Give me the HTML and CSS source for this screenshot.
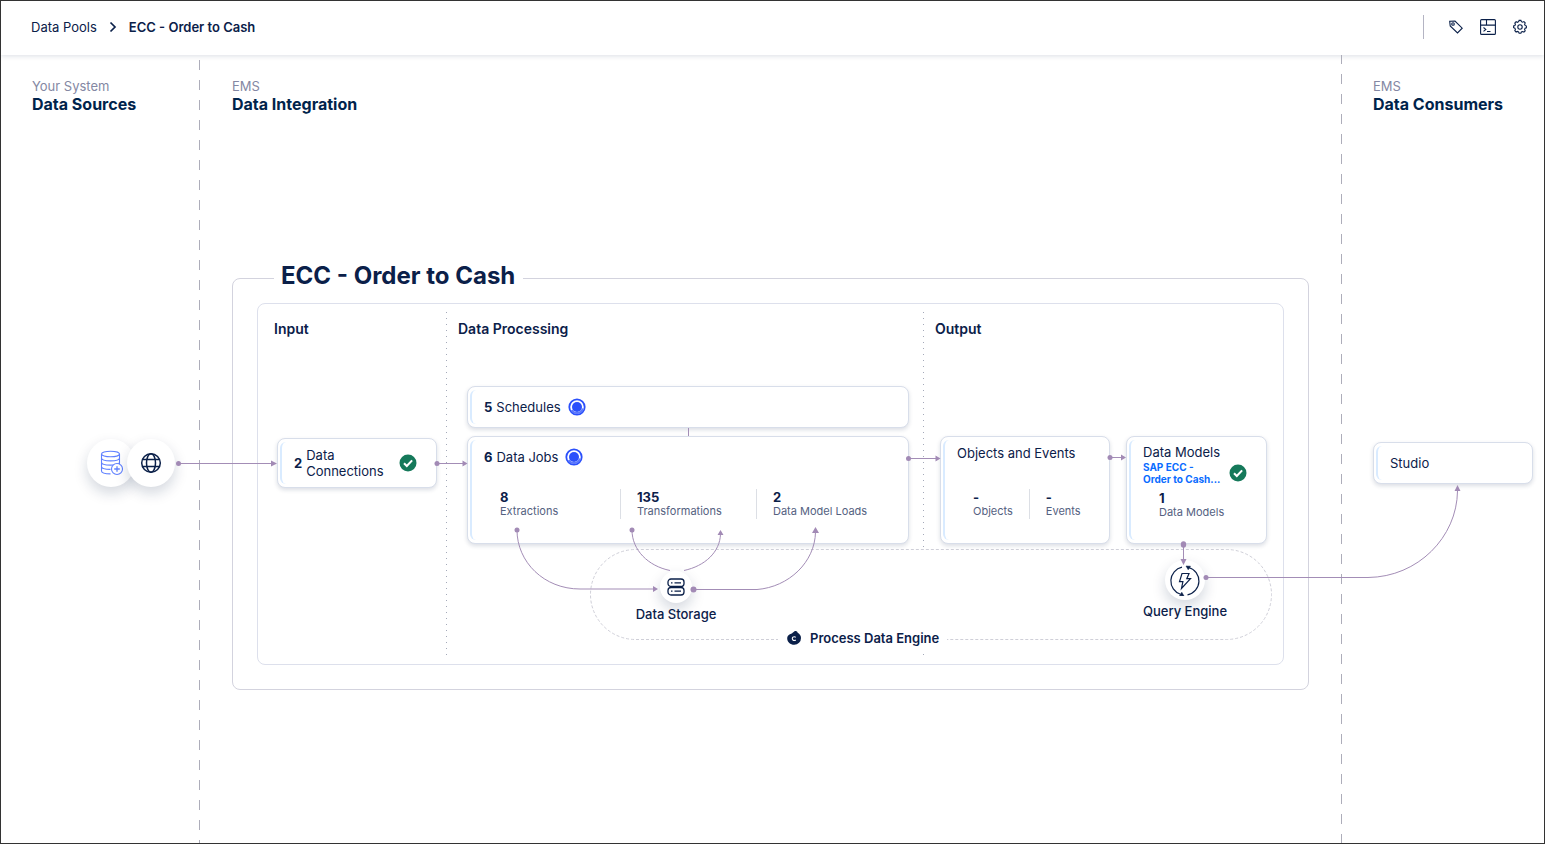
FILE: index.html
```html
<!DOCTYPE html>
<html lang="en">
<head>
<meta charset="utf-8">
<title>ECC - Order to Cash</title>
<link rel="stylesheet" href="styles.css">
</head>
<body>
<svg class="defs" aria-hidden="true">
  <symbol id="check" viewBox="0 0 18 18"><circle cx="9" cy="9" r="8.5" fill="#15795a"/><path d="M5 9.3l2.8 2.7 5.3-5.6" fill="none" stroke="#fff" stroke-width="2.1"/></symbol>
  <symbol id="running" viewBox="0 0 18 18"><circle cx="9" cy="9" r="7.7" fill="#fff" stroke="#2b50fb" stroke-width="1.8"/><circle cx="9" cy="9" r="5" fill="#2b50fb"/><path d="M3.800 12A6 6 0 0 0 14.800 10.500" fill="none" stroke="#5c78fc" stroke-width="2"/></symbol>
</svg>
<header class="topbar">
  <nav class="crumbs" aria-label="Breadcrumb">
    <a href="#pools">Data Pools</a>
    <svg width="8" height="12" viewBox="0 0 8 12" aria-hidden="true"><path d="M1.500 1.500L6 6l-4.500 4.500" fill="none" stroke="#0b2049" stroke-width="1.700"/></svg>
    <span class="current">ECC - Order to Cash</span>
  </nav>
  <div class="tools">
    <button type="button" aria-label="Tags"><svg width="16" height="16" viewBox="0 0 16 16"><path d="M1.700 2.200l5.300-.2 7.200 7.200-4.700 4.700-7.300-7z"/><circle cx="5" cy="5" r="1.300"/></svg></button>
    <button type="button" aria-label="Console"><svg width="16" height="16" viewBox="0 0 16 16"><rect x=".6" y=".6" width="14.800" height="14.800" rx="1"/><path d="M.6 6.100h14.800M6.500.6v5.500M3.500 8.500l2.300 1.900-2.300 1.900M7 12.500h3.500"/></svg></button>
    <button type="button" aria-label="Settings"><svg width="16" height="16" viewBox="0 0 16 16"><circle cx="8" cy="8" r="2.200"/><path d="M6.600 2.700L7.100 1.400h1.800l.5 1.300 1.200.5 1.300-.6 1.300 1.300-.6 1.300.5 1.200 1.300.6v1.800l-1.300.5-.5 1.200.6 1.300-1.300 1.300-1.300-.6-1.200.5-.5 1.200H7.100l-.5-1.300-1.200-.5-1.300.6-1.300-1.300.6-1.300-.5-1.200-1.300-.5V7l1.300-.5.5-1.200-.6-1.300 1.300-1.300 1.300.6z"/></svg></button>
  </div>
</header>

<main class="stage">
  <section class="lane lane-sources">
    <p class="owner">Your System</p>
    <h2>Data Sources</h2>
    <div class="sources">
      <span class="disc"><svg width="24" height="26" viewBox="-1 0 24 26" fill="none" stroke="#5f80ff" stroke-width="1.100"><ellipse cx="10.500" cy="4" rx="9" ry="2.800"/><path d="M1.500 4v17c0 1.700 4 2.900 9 2.900M19.500 4v11M1.500 8c0 1.700 4 2.900 9 2.900s9-1.200 9-2.900M1.500 12.200c0 1.700 4 2.900 9 2.900s9-1.200 9-2.900M1.500 16.500c0 1.700 4 2.900 9 2.900"/><circle cx="17" cy="19" r="5.500" fill="#fff"/><path d="M17 16.200v5.600M14.200 19h5.600" stroke-width="1.300"/></svg></span>
      <span class="disc"><svg width="22" height="22" viewBox="0 0 22 22" fill="none" stroke="#0b2049" stroke-width="1.500"><circle cx="11" cy="11" r="9.300"/><ellipse cx="11" cy="11" rx="4.500" ry="9.300"/><path d="M2.700 7.500h16.600M2.700 14.500h16.600"/></svg></span>
    </div>
  </section>

  <section class="lane lane-integration">
    <p class="owner">EMS</p>
    <h2>Data Integration</h2>
    <div class="pool">
      <h1>ECC - Order to Cash</h1>
      <div class="panel">
        <section class="step step-input">
          <h3>Input</h3>
          <article class="card connections">
            <b>2</b><span class="name">Data Connections</span>
            <svg class="status"><use href="#check"/></svg>
          </article>
        </section>
        <section class="step step-processing">
          <h3>Data Processing</h3>
          <div class="stack">
            <article class="card schedules">
              <div class="title"><b>5</b><span>Schedules</span><svg class="status"><use href="#running"/></svg></div>
            </article>
            <article class="card jobs">
              <div class="title"><b>6</b><span>Data Jobs</span><svg class="status"><use href="#running"/></svg></div>
              <dl class="stats thirds">
                <div><dd>8</dd><dt>Extractions</dt></div>
                <div><dd>135</dd><dt>Transformations</dt></div>
                <div><dd>2</dd><dt>Data Model Loads</dt></div>
              </dl>
            </article>
          </div>
        </section>
        <section class="step step-output">
          <h3>Output</h3>
          <div class="row">
            <article class="card objects">
              <div class="title">Objects and Events</div>
              <dl class="stats">
                <div><dd>-</dd><dt>Objects</dt></div>
                <div><dd>-</dd><dt>Events</dt></div>
              </dl>
            </article>
            <article class="card models">
              <div class="models-head">
                <div><div class="title">Data Models</div><a href="#model">SAP ECC -<br>Order to Cash...</a></div>
                <svg class="status"><use href="#check"/></svg>
              </div>
              <dl class="stats"><div><dd>1</dd><dt>Data Models</dt></div></dl>
            </article>
          </div>
        </section>

        <svg class="boundary" width="682" height="91" viewBox="590 549 682 91" aria-hidden="true"><path d="M779 639.500H635.500a45 45 0 0 1 0-90H1226.500a45 45 0 0 1 0 90H947"/></svg>
        <div class="node node-storage">
          <span class="disc small"><svg width="18" height="18" viewBox="0 0 18 18" fill="none" stroke="#0b2049" stroke-width="1.300"><rect x="1" y="1" width="16" height="7.500" rx="3"/><rect x="1" y="9.500" width="16" height="7.500" rx="3"/><path d="M4 4.800h1.500M7.500 4.800H14M4 13.200h1.500M7.500 13.200H14"/></svg></span>
          <span>Data Storage</span>
        </div>
        <div class="node node-query">
          <span class="disc medium"><svg width="32" height="32" viewBox="0 -1 32 32" fill="none" stroke="#0b2049" stroke-width="1.200"><path d="M13 2.200A14 14 0 0 0 11.500 29.200M19.500 2.500A14 14 0 0 1 18.500 29.800"/><path d="M17 1l4.500.2-2.300 3.600zM15 31l-4.500-.2 2.300-3.600z" fill="#0b2049" stroke-width=".5"/><path d="M13 8.500h7l-2.200 5.200h3.700L12.500 23.500l1.400-6.800H10.500z"/></svg></span>
          <span>Query Engine</span>
        </div>
        <div class="engine">
          <svg width="16" height="16" viewBox="0 0 16 16" aria-hidden="true"><path d="M8.500 1.300c1.500-1 3 0 3.200 1.500 2 1 3.300 3 3.300 5.200a6.700 6.700 0 0 1-6.800 6.800C4.400 14.800 1.200 12 1.200 8.500c0-3 2.300-4.200 4-4.800 1.500-.6 2-1.500 3.300-2.400z" fill="#0b2049"/><path d="M9.700 7.400a1.900 1.900 0 1 0 0 2.400" fill="none" stroke="#fff" stroke-width="1.100"/></svg>
          <span>Process Data Engine</span>
        </div>
      </div>
    </div>
  </section>

  <section class="lane lane-consumers">
    <p class="owner">EMS</p>
    <h2>Data Consumers</h2>
    <article class="card studio">Studio</article>
  </section>

  <svg class="wires" width="1543" height="788" viewBox="1 55 1543 788" aria-hidden="true">
    <path class="line" d="M178 463.500H272M436 463.500H463M688.500 428V436M908 458.500H936M1110 457.500H1122M1183.500 545V560M517 530C517 562 544 589 580 589H653M632 530C632 550 648 566 670 570.500M684 570.500C705 566 720 552 720.500 534M693 589.500H757C789 587 815 562 815.500 532M1206 577.500H1368C1418 577 1457 537 1457.500 491"/>
    <g class="tips">
      <path d="M277 463.500l-6-3v6zM467.500 463.500l-5-3v6zM940.500 458.500l-5-3v6zM1126 457.500l-5-3v6zM1183.500 565l-3-6h6zM658 589l-5-3v6zM720.500 530l-3 5h6zM815.500 527l-3.500 6h7zM1457.500 485l-3 6h6z"/>
      <circle cx="178.500" cy="463.500" r="2.500"/><circle cx="437" cy="463.500" r="2.500"/><circle cx="908.500" cy="458.500" r="2.500"/><circle cx="1110" cy="457.500" r="2.500"/><ellipse cx="1183.500" cy="544.500" rx="2.700" ry="3.300"/><circle cx="517" cy="530" r="2.500"/><circle cx="632" cy="530" r="2.500"/><circle cx="693.500" cy="589.500" r="3"/><circle cx="1206" cy="577.500" r="2.500"/>
    </g>
  </svg>
</main>
</body>
</html>
```
FILE: styles.css
```css
* { box-sizing: border-box; }

body {
  margin: 0;
  min-height: 100vh;
  display: flex;
  flex-direction: column;
  border: 1px solid #333;
  background: #fff;
  color: #0b2049;
  font: 13px/18px Inter, "Liberation Sans", sans-serif;
}

h1, h2, h3, p, dl, dd { margin: 0; }
a { color: inherit; text-decoration: none; }
b { font-weight: 700; }
.defs { display: none; }

.topbar {
  display: flex;
  align-items: center;
  justify-content: space-between;
  height: 54px;
  padding: 0 8px 2px 30px;
  background: #fff;
  box-shadow: 0 1px 5px #0b204926;
}
.crumbs { display: flex; align-items: center; gap: 12px; }
.current { font-weight: 600; }
.tools { display: flex; align-items: center; }
.tools::before {
  content: "";
  width: 1px;
  height: 24px;
  margin-right: 16px;
  background: #b4b4c3;
}
.tools button {
  display: grid;
  place-items: center;
  width: 32px;
  height: 32px;
  padding: 0;
  border: 0;
  background: none;
}
.tools svg { fill: none; stroke: #0b2049; stroke-width: 1.100; }

.stage {
  position: relative;
  flex: 1;
  display: grid;
  grid-template-columns: 199px 1fr 203px;
}
.lane { padding-top: 22px; }
.lane-sources {
  padding-left: 31px;
  background: repeating-linear-gradient(#0000 0 5px, #adadba 5px 15px, #0000 15px 20px) right / 1px 100% no-repeat;
}
.lane-integration { padding-left: 32px; padding-right: 32px; }
.lane-consumers {
  padding-left: 32px;
  padding-right: 11px;
  background: repeating-linear-gradient(#adadba 0 9px, #0000 9px 19px, #adadba 19px 20px) left / 1px 100% no-repeat;
}
.owner { color: #8488a3; }
h2 { font-size: 16px; line-height: 18px; font-weight: 700; color: #00234b; }

.disc {
  display: grid;
  place-items: center;
  width: 48px;
  height: 48px;
  border-radius: 50%;
  background: #fff;
  box-shadow: 0 6px 14px #0b20492e;
}
.disc.small { width: 32px; height: 32px; }
.disc.medium { width: 40px; height: 40px; }
.sources { display: flex; margin: 326px 0 0 55px; }
.sources .disc + .disc { margin-left: -8px; }

.pool {
  margin-top: 165px;
  padding: 0 24px 24px;
  border: 1px solid #d3d3de;
  border-radius: 8px;
}
h1 {
  width: fit-content;
  margin: -18px 0 12px 17px;
  padding: 0 8px 0 7px;
  background: #fff;
  font-size: 24px;
  line-height: 30px;
  font-weight: 700;
}
.panel {
  position: relative;
  display: grid;
  grid-template-columns: 189px 477px 1fr;
  min-height: 362px;
  border: 1px solid #dde0ec;
  border-radius: 8px;
}
.step {
  margin: 8px 0;
  padding-top: 8px;
  background: repeating-linear-gradient(#a4a9b9 0 1px, #0000 1px 6px) right / 1px 100% no-repeat;
}
.step-output { background: none; }
h3 { margin-left: 11px; font-size: 14px; line-height: 18px; font-weight: 600; }
.step-input h3 { margin-left: 16px; }

.card {
  display: flex;
  padding: 0 16px 0 12px;
  border: 1px solid #d8deea;
  border-radius: 8px;
  background: #fff;
  box-shadow: 0 2px 4px #0b204926;
}
.card::before {
  content: "";
  flex: none;
  width: 10px;
  margin: 3px 2px 3px -10px;
  border-left: 2px solid #d9ebff;
  border-radius: 6px;
}
.status { flex: none; width: 18px; height: 18px; }

.connections {
  align-items: center;
  height: 50px;
  width: 160px;
  margin: 100px 0 0 19px;
}
.connections::before, .schedules::before, .studio::before { align-self: stretch; }
.connections .name { width: 88px; margin-left: 4px; line-height: 16px; }
.connections .status { margin-left: 5px; }

.stack { display: flex; flex-direction: column; gap: 8px; margin: 48px 15px 0 20px; }
.row { display: flex; gap: 16px; margin: 98px 16px 0; }
.title { display: flex; align-items: center; gap: 4px; }
.title .status { margin-left: 3px; }
.schedules { align-items: center; height: 42px; }
.jobs, .objects, .models {
  display: grid;
  grid-template-columns: auto 1fr;
  grid-template-rows: auto 1fr;
  height: 108px;
}
.jobs::before, .objects::before, .models::before { grid-row: 1 / 3; }
.jobs .title { margin-top: 11px; }
.jobs .stats { margin-top: 23px; }
.objects { width: 170px; padding-right: 0; }
.objects .title { margin-top: 7px; }
.objects .stats { margin-top: 27px; }
.models { flex: 1; }
.models-head { display: flex; justify-content: space-between; align-items: flex-end; margin-top: 6px; }
.models-head a { display: block; color: #0a6cff; font-size: 10px; line-height: 12px; font-weight: 700; white-space: nowrap; }
.models .status { margin: 0 3px 3px 0; }
.models .stats { margin-top: 5px; }

.stats { display: flex; align-self: start; }
.stats div { display: flex; flex-direction: column; padding: 0 16px 2px; }
.stats div + div { border-left: 1px solid #dcdfe5; }
.thirds { display: grid; grid-template-columns: repeat(3, 1fr); }
dd { font-size: 13px; line-height: 16px; font-weight: 700; }
dt { font-size: 11px; line-height: 12px; color: #54617f; white-space: nowrap; }

.studio { align-items: center; height: 42px; margin-top: 329px; }

.wires { position: absolute; z-index: 3; top: 0; left: 0; pointer-events: none; }
.line { fill: none; stroke: #a38db6; stroke-width: 1; }
.tips { fill: #a28ab5; }
.boundary {
  position: absolute;
  z-index: 1;
  left: 332px;
  top: 245px;
  fill: #fff;
  stroke: #cfcfd8;
  stroke-dasharray: 3 2;
}

.node {
  position: absolute;
  z-index: 2;
  display: flex;
  flex-direction: column;
  align-items: center;
  gap: 2px;
  width: 120px;
  font-weight: 500;
}
.node-storage { left: 358px; top: 267px; }
.node-query { left: 867px; top: 256px; }
.engine {
  position: absolute;
  z-index: 2;
  left: 520px;
  top: 325px;
  display: flex;
  align-items: center;
  gap: 8px;
  padding: 0 8px 6px;
  background: #fff;
  font-weight: 600;
}
```
